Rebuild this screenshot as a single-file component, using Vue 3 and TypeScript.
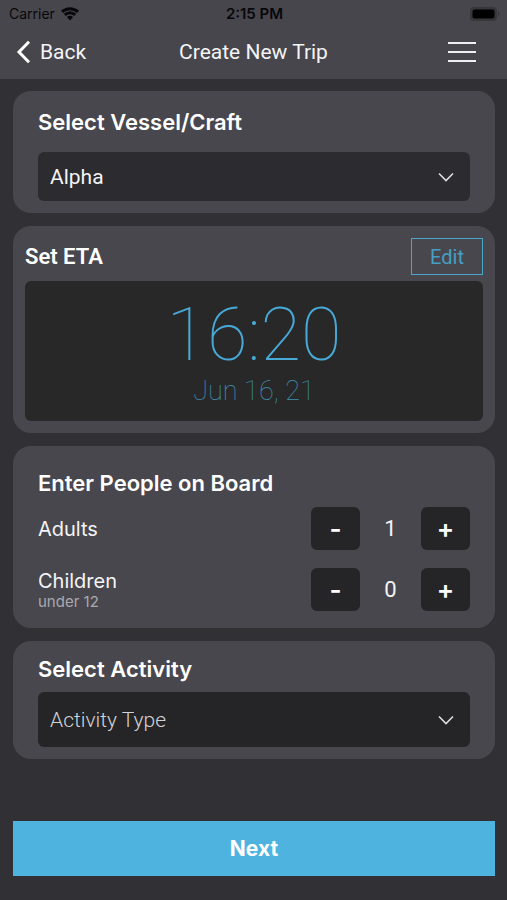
<script setup lang="ts">
import { reactive, ref } from 'vue'

interface PassengerGroup {
  id: string
  label: string
  note?: string
  count: number
}

const vessels: string[] = ['Alpha']
const activities: string[] = ['Activity Type']

const vessel = ref<string>(vessels[0])
const activity = ref<string>(activities[0])

const groups = reactive<PassengerGroup[]>([
  { id: 'adults', label: 'Adults', count: 1 },
  { id: 'children', label: 'Children', note: 'under 12', count: 0 },
])

function change(group: PassengerGroup, step: number): void {
  group.count = Math.max(0, group.count + step)
}
</script>

<template>
  <div class="screen">
    <header class="top">
      <div class="status">
        <div class="carrier">
          <span>Carrier</span>
          <svg class="wifi" viewBox="0 0 18 14" aria-hidden="true">
            <path d="M1 4.9a11.5 11.5 0 0 1 16 0" />
            <path d="M3.8 7.9a7.5 7.5 0 0 1 10.4 0" />
            <path class="dot" d="M9 13.4 5.9 10.1a4.6 4.6 0 0 1 6.2 0z" />
          </svg>
        </div>
        <span class="clock">2:15 PM</span>
        <svg class="battery" viewBox="0 0 30 14" aria-hidden="true">
          <rect class="shell" x="0" y="0" width="27" height="14" rx="4" />
          <rect class="charge" x="2.5" y="2.5" width="22" height="9" rx="2" />
          <path class="shell" d="M28 4.5c2 .6 2 4.4 0 5z" />
        </svg>
      </div>
      <nav class="bar">
        <a class="back" href="#">
          <svg class="back-icon" viewBox="0 0 16 24" aria-hidden="true">
            <path d="M13 1.8 3 12l10 10.2" />
          </svg>
          <span>Back</span>
        </a>
        <h1 class="page-title">Create New Trip</h1>
        <button class="menu" type="button" aria-label="Menu">
          <svg viewBox="0 0 28 22" aria-hidden="true">
            <path d="M0 2h28M0 11h28M0 20h28" />
          </svg>
        </button>
      </nav>
    </header>

    <main class="content">
      <section class="card inset">
        <label class="heading tall" for="vessel">Select Vessel/Craft</label>
        <div class="picker">
          <select id="vessel" v-model="vessel" class="select">
            <option v-for="name in vessels" :key="name">{{ name }}</option>
          </select>
          <svg class="chevron" viewBox="0 0 16 10" aria-hidden="true">
            <path d="m1 1.5 7 7 7-7" />
          </svg>
        </div>
      </section>

      <section class="card">
        <div class="eta-head">
          <h2 class="eta-title">Set ETA</h2>
          <button class="edit" type="button">Edit</button>
        </div>
        <div class="eta">
          <span class="time">16:20</span>
          <span class="date">Jun 16, 21</span>
        </div>
      </section>

      <section class="card people">
        <h2 class="heading">Enter People on Board</h2>
        <div v-for="group in groups" :key="group.id" class="row">
          <div class="who">
            <span class="who-label">{{ group.label }}</span>
            <span v-if="group.note" class="who-note">{{ group.note }}</span>
          </div>
          <div class="stepper">
            <button class="step" type="button" @click="change(group, -1)">-</button>
            <output class="count">{{ group.count }}</output>
            <button class="step" type="button" @click="change(group, 1)">+</button>
          </div>
        </div>
      </section>

      <section class="card inset">
        <label class="heading" for="activity">Select Activity</label>
        <div class="picker">
          <select id="activity" v-model="activity" class="select hint">
            <option v-for="name in activities" :key="name">{{ name }}</option>
          </select>
          <svg class="chevron" viewBox="0 0 16 10" aria-hidden="true">
            <path d="m1 1.5 7 7 7-7" />
          </svg>
        </div>
      </section>

      <button class="next" type="button">Next</button>
    </main>
  </div>
</template>

<style>
body {
  background: #313035;
}
</style>

<style scoped>
* {
  box-sizing: border-box;
}

.screen {
  display: flex;
  flex-direction: column;
  min-height: 100vh;
  background: #313035;
  color: #f4f4f6;
  font-family: Roboto, sans-serif;
}

button,
select {
  margin: 0;
  border: 0;
  color: inherit;
  font-family: inherit;
  cursor: pointer;
}

h1,
h2 {
  margin: 0;
}

svg {
  display: block;
  fill: none;
}

.top {
  background: #47464c;
}

.status {
  display: grid;
  grid-template-columns: 1fr auto 1fr;
  align-items: center;
  height: 27px;
  padding: 0 7px 0 9px;
  color: #08080a;
  font-family: Inter, sans-serif;
  font-size: 14px;
}

.carrier {
  display: flex;
  align-items: center;
  gap: 6px;
}

.wifi {
  width: 18px;
  height: 14px;
  stroke: #08080a;
  stroke-width: 3;
}

.wifi .dot {
  fill: #08080a;
  stroke: none;
}

.clock {
  font-size: 15px;
  font-weight: 600;
}

.battery {
  justify-self: end;
  width: 30px;
  height: 14px;
}

.shell {
  fill: #37363b;
}

.charge {
  fill: #000;
}

.bar {
  display: grid;
  grid-template-columns: 1fr auto 1fr;
  align-items: center;
  height: 52px;
  padding: 0 16px 2px;
}

.back {
  display: flex;
  align-items: center;
  gap: 8px;
  color: inherit;
  font-size: 21px;
  text-decoration: none;
}

.back-icon {
  width: 16px;
  height: 24px;
  stroke: #fff;
  stroke-width: 3;
}

.page-title {
  font-size: 21px;
  font-weight: 400;
}

.menu {
  justify-self: end;
  padding: 0 15px;
  background: none;
}

.menu svg {
  width: 28px;
  height: 22px;
  stroke: #f0f0f2;
  stroke-width: 2;
}

.content {
  display: flex;
  flex: 1;
  flex-direction: column;
  gap: 13px;
  padding: 12px 12px 24px 13px;
}

.card {
  padding: 12px;
  border-radius: 18px;
  background: #48474e;
}

.inset {
  padding: 12px 25px;
}

.heading {
  display: block;
  height: 39px;
  color: #fff;
  font-family: Inter, sans-serif;
  font-size: 22px;
  font-weight: 600;
  line-height: 32px;
}

.tall {
  height: 49px;
  line-height: 38px;
}

.picker {
  display: grid;
  align-items: center;
}

.picker > * {
  grid-area: 1 / 1;
}

.select {
  width: 100%;
  height: 49px;
  padding: 0 48px 0 12px;
  border-radius: 6px;
  appearance: none;
  background: #2c2b2f;
  font-size: 21px;
}

.hint {
  height: 55px;
  background: #252527;
  color: #d2d2d5;
  font-weight: 300;
}

.chevron {
  justify-self: end;
  width: 16px;
  height: 10px;
  margin-right: 16px;
  stroke: #dedee1;
  stroke-width: 1.6;
  pointer-events: none;
}

.eta-head {
  display: flex;
  align-items: center;
  justify-content: space-between;
  margin-bottom: 6px;
}

.eta-title {
  color: #fff;
  font-size: 22px;
  font-weight: 600;
}

.edit {
  width: 72px;
  height: 37px;
  padding: 0;
  border: 1px solid #4aa5cb;
  background: none;
  color: #469fc3;
  font-size: 20px;
}

.eta {
  display: flex;
  flex-direction: column;
  align-items: center;
  height: 140px;
  padding-top: 16px;
  border-radius: 6px;
  background: #282829;
}

.time {
  color: #47a9d6;
  font-size: 74px;
  font-weight: 100;
  line-height: 76px;
}

.date {
  color: #3f91b0;
  font-size: 27px;
  font-weight: 100;
  line-height: 36px;
}

.people {
  display: flex;
  flex-direction: column;
  gap: 18px;
  padding: 22px 25px 17px;
}

.people .heading {
  height: 21px;
  line-height: 30px;
}

.row {
  display: flex;
  align-items: center;
  justify-content: space-between;
  height: 43px;
}

.who {
  display: flex;
  flex-direction: column;
  font-family: Inter, sans-serif;
}

.who-label {
  font-size: 20px;
  line-height: 24px;
}

.who-note {
  color: #a9a9ae;
  font-size: 15px;
  line-height: 18px;
}

.stepper {
  display: flex;
  align-items: center;
}

.step {
  width: 49px;
  height: 43px;
  padding: 0;
  border-radius: 6px;
  background: #252527;
  color: #fff;
  font-family: Inter, sans-serif;
  font-size: 26px;
  font-weight: 600;
}

.count {
  width: 61px;
  font-size: 22px;
  text-align: center;
}

.next {
  height: 55px;
  margin-top: auto;
  background: #4eb4df;
  color: #fff;
  font-family: Inter, sans-serif;
  font-size: 21px;
  font-weight: 700;
}
</style>
